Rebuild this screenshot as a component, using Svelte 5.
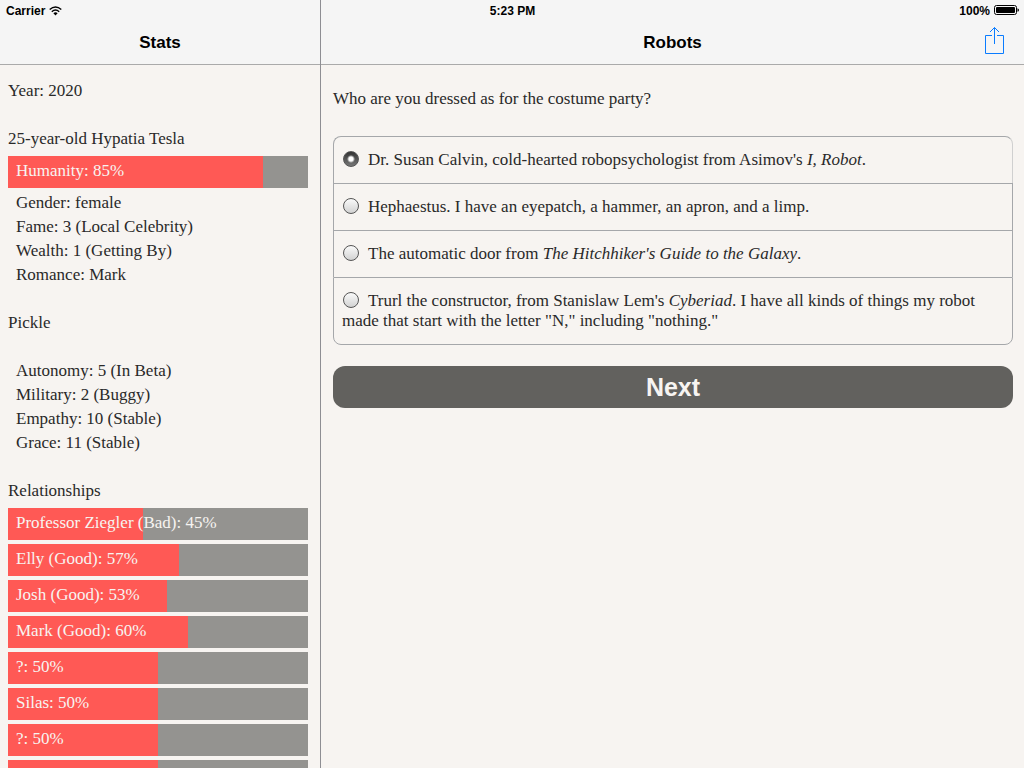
<script lang="ts">
  let stats = [
    'Gender: female',
    'Fame: 3 (Local Celebrity)',
    'Wealth: 1 (Getting By)',
    'Romance: Mark',
  ];

  let robot = [
    'Autonomy: 5 (In Beta)',
    'Military: 2 (Buggy)',
    'Empathy: 10 (Stable)',
    'Grace: 11 (Stable)',
  ];

  let relationships = [
    { name: 'Professor Ziegler (Bad)', value: 45 },
    { name: 'Elly (Good)', value: 57 },
    { name: 'Josh (Good)', value: 53 },
    { name: 'Mark (Good)', value: 60 },
    { name: '?', value: 50 },
    { name: 'Silas', value: 50 },
    { name: '?', value: 50 },
    { name: '?', value: 50 },
  ];

  // each option is split round its italic title
  let options = [
    { before: "Dr. Susan Calvin, cold-hearted robopsychologist from Asimov's ", title: 'I, Robot', after: '.' },
    { before: 'Hephaestus. I have an eyepatch, a hammer, an apron, and a limp.', title: '', after: '' },
    { before: 'The automatic door from ', title: "The Hitchhiker's Guide to the Galaxy", after: '.' },
    {
      before: "Trurl the constructor, from Stanislaw Lem's ",
      title: 'Cyberiad',
      after: '. I have all kinds of things my robot made that start with the letter "N," including "nothing."',
    },
  ];

  let selected = $state(0);
</script>

{#snippet bar(name, value)}
  <div class="bar">
    <div class="fill" style="width: {value}%"></div>
    <span class="bar-label">{name}: {value}%</span>
  </div>
{/snippet}

<div class="screen">
  <aside class="pane sidebar">
    <header class="nav"><h1>Stats</h1></header>
    <div class="stats">
      <p>Year: 2020</p>
      <h2>25-year-old Hypatia Tesla</h2>
      <div class="bars">{@render bar('Humanity', 85)}</div>
      <ul>
        {#each stats as line}<li>{line}</li>{/each}
      </ul>
      <h2 class="spaced">Pickle</h2>
      <ul>
        {#each robot as line}<li>{line}</li>{/each}
      </ul>
      <h2>Relationships</h2>
      <div class="bars">
        {#each relationships as r}
          {@render bar(r.name, r.value)}
        {/each}
      </div>
    </div>
  </aside>

  <main class="pane content">
    <header class="nav">
      <h1>Robots</h1>
      <button class="share" aria-label="Share">
        <svg width="20" height="28" viewBox="0 0 20 28" fill="none" stroke="#0a7cff">
          <path d="M7 8.5H.5v18h18v-18H12M9.5 17V.5M5 5L9.5 .5L14 5" />
        </svg>
      </button>
    </header>
    <form class="story" onsubmit={(e) => e.preventDefault()}>
      <p id="question">Who are you dressed as for the costume party?</p>
      <div class="choices" role="radiogroup" aria-labelledby="question">
        {#each options as opt, i}
          <label class="choice">
            <input type="radio" name="choice" value={i} bind:group={selected} />{opt.before}{#if opt.title}<i>{opt.title}</i>{/if}{opt.after}
          </label>
        {/each}
      </div>
      <button class="next">Next</button>
    </form>
  </main>

  <div class="status">
    <span class="carrier">
      Carrier
      <svg width="13" height="10" viewBox="0 0 13 10" fill="none" stroke="#000" stroke-width="1.5">
        <path d="M.7 3.5Q6.5-1.6 12.3 3.5" />
        <path d="M2.8 5.7Q6.5 2.4 10.2 5.7" />
        <path d="M4.4 7.2Q6.5 5.4 8.6 7.2L6.5 9.4Z" fill="#000" stroke="none" />
      </svg>
    </span>
    <span>5:23 PM</span>
    <span class="battery">
      100%
      <svg width="25" height="10" viewBox="0 0 25 10">
        <rect x=".5" y=".5" width="22" height="9" rx="2" fill="none" stroke="#000" />
        <rect x="2" y="2" width="19" height="6" rx="1" />
        <path d="M23.5 3.2Q25 3.6 25 5T23.5 6.8Z" />
      </svg>
    </span>
  </div>
</div>

<style>
  :global(body) {
    margin: 0;
    background: #f7f4f1;
  }

  .screen {
    display: grid;
    grid-template-columns: 321px 1fr;
    grid-template-rows: 20px 1fr;
    height: 100vh;
    overflow: hidden;
    color: #292929;
    background: #f7f4f1;
    font-family: Palatino, 'Palatino Linotype', 'Liberation Serif', serif;
    font-size: 17px;
    line-height: 24px;
  }

  /* the panes run up behind the status bar */
  .pane {
    grid-row: 1 / 3;
    display: flex;
    flex-direction: column;
    min-width: 0;
    min-height: 0;
  }

  .sidebar {
    grid-column: 1;
    border-right: 1px solid #8e8e93;
  }

  .content { grid-column: 2; }

  .nav {
    position: relative;
    flex: none;
    padding-top: 22px;
    background: #f5f5f5;
    border-bottom: 1px solid #aaa;
  }

  h1 {
    margin: 0;
    color: #000;
    font: bold 17px/42px 'Helvetica Neue', Helvetica, 'Liberation Sans', sans-serif;
    text-align: center;
  }

  .share {
    position: absolute;
    right: 19px;
    bottom: 9px;
    padding: 0;
    border: 0;
    background: none;
    cursor: pointer;
  }

  .share svg { display: block; }

  .status {
    grid-row: 1;
    grid-column: 1 / 3;
    z-index: 1;
    display: grid;
    grid-template-columns: 1fr auto 1fr;
    padding: 1px 5px 0 6px;
    color: #000;
    font: bold 12px/20px 'Helvetica Neue', Helvetica, 'Liberation Sans', sans-serif;
  }

  .carrier, .battery {
    display: flex;
    align-items: center;
    gap: 4px;
  }

  .battery { justify-content: flex-end; }
  .battery svg { margin-bottom: 2px; }
  .carrier svg { margin-bottom: 1px; }

  .stats {
    flex: 1;
    overflow: hidden;
    padding: 14px 12px 0 8px;
  }

  .stats p, .stats ul {
    margin: 0 0 24px;
    padding: 0;
    list-style: none;
  }

  .stats ul { padding-left: 8px; }

  h2 {
    margin: 0;
    font-size: 17px;
    font-weight: normal;
  }

  .spaced { margin-bottom: 24px; }

  .bars {
    display: flex;
    flex-direction: column;
    gap: 4px;
    padding: 5px 0 3px;
  }

  .bar {
    position: relative;
    height: 32px;
    color: #f7f4f1;
    line-height: 30px;
    background: #949390;
  }

  .fill {
    height: 100%;
    background: #ff5955;
  }

  .bar-label {
    position: absolute;
    top: 0;
    left: 8px;
  }

  .story { padding: 22px 11px 0 12px; }
  .story p { margin: 0 0 25px; }

  .choice {
    display: block;
    padding: 13px 8px;
    border: 1px solid #a5a7aa;
    border-bottom-width: 0;
    line-height: 20px;
    cursor: pointer;
  }

  .choice:first-child {
    border-right-color: #d0d0d0;
    border-radius: 8px 8px 0 0;
  }

  .choice:last-child {
    border-bottom-width: 1px;
    border-radius: 0 0 8px 8px;
  }

  .choice input {
    appearance: none;
    width: 16px;
    height: 16px;
    margin: 0 9px 0 1px;
    border: 1px solid #555;
    border-radius: 50%;
    vertical-align: -2px;
    background: linear-gradient(#fafafa, #d2d2d2);
  }

  .choice input:checked {
    background: radial-gradient(circle, #fff 0 2px, transparent 4px), linear-gradient(#333, #777);
  }

  .next {
    display: block;
    width: 100%;
    height: 42px;
    margin-top: 21px;
    padding: 0;
    border: 0;
    border-radius: 12px;
    color: #f7f4f1;
    background: #62615e;
    font: bold 25px/42px 'Helvetica Neue', Helvetica, 'Liberation Sans', sans-serif;
    cursor: pointer;
  }
</style>
